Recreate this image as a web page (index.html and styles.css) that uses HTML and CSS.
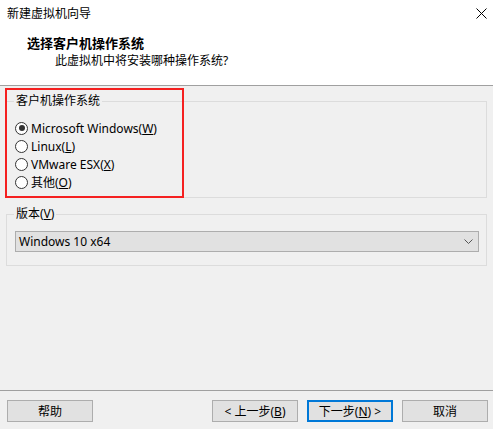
FILE: index.html
```html
<!DOCTYPE html>
<html lang="zh-CN">
<head>
  <meta charset="UTF-8">
  <title>新建虚拟机向导</title>
  <link rel="stylesheet" href="styles.css">
</head>
<body>

  <div class="top">
    <div class="titlebar">
      <span>新建虚拟机向导</span>
      <svg class="close" width="11" height="11" viewBox="0 0 11 11">
        <path d="M0.5 0.5 L10.5 10.5 M10.5 0.5 L0.5 10.5" stroke="#000" stroke-width="1" fill="none"/>
      </svg>
    </div>
    <div class="heading">选择客户机操作系统</div>
    <div class="subheading">此虚拟机中将安装哪种操作系统?</div>
  </div>

  <div class="main">
    <div class="marked">
      <fieldset class="group">
        <legend>客户机操作系统</legend>
        <label class="radio"><span class="dot checked"></span>Microsoft Windows(<u>W</u>)</label>
        <label class="radio"><span class="dot"></span>Linux(<u>L</u>)</label>
        <label class="radio"><span class="dot"></span>VMware ESX(<u>X</u>)</label>
        <label class="radio"><span class="dot"></span>其他(<u>O</u>)</label>
      </fieldset>
      <div class="redbox"></div>
    </div>

    <fieldset class="group version">
      <legend>版本(<u>V</u>)</legend>
      <div class="select">
        <span>Windows 10 x64</span>
        <svg width="9" height="6" viewBox="0 0 9 6">
          <polyline points="0.5,0.5 4.5,4.5 8.5,0.5" stroke="#555" stroke-width="1" fill="none"/>
        </svg>
      </div>
    </fieldset>
  </div>

  <div class="footer">
    <button>帮助</button>
    <div class="spacer"></div>
    <button>&lt; 上一步(<u>B</u>)</button>
    <button class="default">下一步(<u>N</u>) &gt;</button>
    <button>取消</button>
  </div>

</body>
</html>
```

FILE: styles.css
```css
body {
  margin: 0;
  height: 100vh;
  display: flex;
  flex-direction: column;
  background-color: #f0f0f0;
  font-family: "Noto Sans", "Noto Sans CJK SC", sans-serif;
  font-size: 12px;
  color: #000;
}
.top {
  height: 85px;
  background-color: #fff;
  border-bottom: 1px solid #a0a0a0;
}
.titlebar {
  height: 27px;
  line-height: 27px;
  padding: 0 6px 0 7px;
  display: flex;
  justify-content: space-between;
  align-items: center;
}
.heading {
  margin-top: 8px;
  padding-left: 27px;
  line-height: 17px;
  font-weight: bold;
  font-size: 13px;
}
.subheading {
  padding-left: 55px;
  line-height: 17px;
}
.main {
  flex: 1;
}
.marked {
  position: relative;
  margin: 7px 6px 0 6px;
}
.group {
  margin: 0;
  padding: 10px 8px 6px 8px;
  border: 1px solid #dcdcdc;
}
.group legend {
  padding: 0 2px;
  margin-left: -1px;
  line-height: 16px;
}
.radio {
  display: flex;
  align-items: center;
  height: 18px;
}
.dot {
  width: 11px;
  height: 11px;
  border: 1px solid #333;
  border-radius: 50%;
  background-color: #fff;
  margin-right: 3px;
  display: flex;
  align-items: center;
  justify-content: center;
}
.dot.checked::after {
  content: "";
  width: 6px;
  height: 6px;
  border-radius: 50%;
  background-color: #333;
}
.redbox {
  position: absolute;
  left: -1px;
  top: -5px;
  width: 179px;
  height: 110px;
  box-sizing: border-box;
  border: 2px solid #f52020;
}
.version {
  margin: 8px 6px 0 6px;
  padding: 9px 7px 13px 8px;
}
.select {
  height: 19px;
  border: 1px solid #adadad;
  background-color: #e1e1e1;
  display: flex;
  align-items: center;
  justify-content: space-between;
  padding: 0 5px 0 3px;
}
.footer {
  border-top: 1px solid #a0a0a0;
  padding: 9px 5px 7px 7px;
  display: flex;
  gap: 9px;
}
.spacer {
  flex: 1;
}
button {
  width: 86px;
  height: 22px;
  padding: 0;
  border: 1px solid #adadad;
  background-color: #e1e1e1;
  font-family: inherit;
  font-size: 12px;
  color: #000;
}
button.default {
  border: 2px solid #0078d7;
}
```
